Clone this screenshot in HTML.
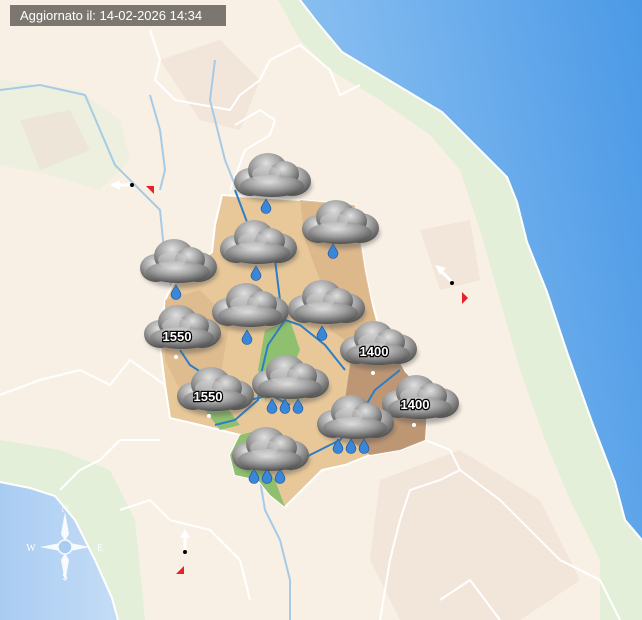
<!DOCTYPE html>
<html><head><meta charset="utf-8"><style>
html,body{margin:0;padding:0;width:642px;height:620px;overflow:hidden;background:#f8f0e4}
svg{display:block}
.lbl{position:absolute;left:10px;top:5px;width:216px;height:21px;background:rgba(112,108,102,0.92);color:#fff;font:13px "Liberation Sans",sans-serif;line-height:21px;padding-left:10px;box-sizing:border-box}
</style></head><body>
<svg width="642" height="620" viewBox="0 0 642 620" xmlns="http://www.w3.org/2000/svg">
<defs>
<linearGradient id="sea" x1="1" y1="0" x2="0" y2="0.3"><stop offset="0" stop-color="#4b99e6"/><stop offset="1" stop-color="#8ec2f2"/></linearGradient>
<linearGradient id="sea2" x1="0" y1="0" x2="1" y2="0"><stop offset="0" stop-color="#a9ccf2"/><stop offset="1" stop-color="#c4dcf6"/></linearGradient>
<radialGradient id="cl" cx="0.45" cy="0.3" r="0.7"><stop offset="0" stop-color="#e0e0e0"/><stop offset="0.5" stop-color="#a0a0a0"/><stop offset="1" stop-color="#505050"/></radialGradient>
<filter id="bl"><feGaussianBlur stdDeviation="2"/></filter>
<g id="cloud">
<ellipse cx="2" cy="8" rx="38" ry="16" fill="#555" opacity="0.45" filter="url(#bl)"/>
<ellipse cx="-22" cy="4" rx="16" ry="14" fill="url(#cl)"/>
<ellipse cx="20" cy="3" rx="19" ry="15" fill="url(#cl)"/>
<ellipse cx="-4" cy="-8" rx="20" ry="17" fill="url(#cl)"/>
<ellipse cx="12" cy="-4" rx="15" ry="13" fill="url(#cl)"/>
<ellipse cx="0" cy="8" rx="32" ry="11" fill="url(#cl)"/>
<ellipse cx="-6" cy="-4" rx="14" ry="8" fill="#cfcfcf" opacity="0.5"/>
</g>
<path id="drop" d="M0,-7 C2,-3 5,0 5,2.5 A5,5 0 0 1 -5,2.5 C-5,0 -2,-3 0,-7Z" fill="#3a86d8" stroke="#1a4f90" stroke-width="0.6"/>
</defs>
<rect width="642" height="620" fill="#f8f0e4"/>
<path d="M278,0 L300,0 L317,22 L342,52 L392,82 L442,112 L482,152 L507,177 L517,202 L527,242 L547,292 L567,352 L592,422 L615,482 L625,520 L642,540 L642,620 L600,620 L600,560 L570,500 L545,440 L520,370 L500,300 L480,230 L460,170 L430,135 L380,100 L330,70 L300,40Z" fill="#e4efd9"/>
<path d="M0,80 L80,90 L120,120 L130,160 L100,190 L50,175 L0,165Z" fill="#e8f0dc" opacity="0.7"/>
<path d="M0,440 L60,450 L110,470 L135,520 L145,620 L0,620Z" fill="#e4efd9"/>
<g fill="#ecdcd2" opacity="0.55">
<path d="M160,60 L220,40 L260,80 L240,130 L200,120Z"/>
<path d="M380,480 L460,450 L540,500 L580,580 L520,620 L400,620 L370,560Z"/>
<path d="M20,120 L70,110 L90,150 L40,170Z"/>
<path d="M420,230 L470,220 L480,280 L440,290Z"/>
</g>
<path d="M300,0 L642,0 L642,540 L625,520 L615,482 L592,422 L567,352 L547,292 L527,242 L517,202 L507,177 L482,152 L442,112 L392,82 L342,52 L317,22Z" fill="url(#sea)"/>
<path d="M0,482 L30,488 L55,496 L75,520 L95,560 L112,598 L118,620 L0,620Z" fill="url(#sea2)"/>
<path d="M300,0 L317,22 L342,52 L392,82 L442,112 L482,152 L507,177 L517,202 L527,242 L547,292 L567,352 L592,422 L615,482 L625,520 L642,540" fill="none" stroke="#fff" stroke-width="2"/>
<path d="M0,482 L30,488 L55,496 L75,520 L95,560 L112,598 L118,620" fill="none" stroke="#fff" stroke-width="2"/>
<g fill="none" stroke="#fff" stroke-width="2">
<path d="M150,30 L160,60 L155,80 L175,100 L230,110 L240,95 L260,80 L270,60 L300,45 L330,70 L340,95 L360,85"/>
<path d="M235,125 L260,110 L275,120 L270,135 L245,150 L230,190"/>
<path d="M0,395 L40,380 L80,370 L110,385 L130,360 L165,385"/>
<path d="M160,440 L120,440 L100,460 L80,470 L60,490"/>
<path d="M425,440 L450,450 L460,470 L440,480 L410,490 L400,520 L390,560 L380,620"/>
<path d="M460,470 L500,500 L560,560 L600,580 L620,620"/>
<path d="M120,510 L150,500 L170,520 L210,530 L240,560 L250,600"/>
<path d="M440,600 L470,580 L500,620"/>
</g>
<g fill="none" stroke="#a6cbe6" stroke-width="2">
<path d="M0,90 L40,85 L85,95 L100,130 L115,165 L140,190 L160,210 L165,260 L175,300"/>
<path d="M150,95 L160,130 L165,170 L160,190"/>
<path d="M215,60 L210,100 L220,140 L225,160 L235,185"/>
<path d="M260,480 L265,510 L280,540 L290,580 L290,620"/>
</g>
<path d="M222,195 L300,200 L355,205 L365,270 L370,295 L380,330 L392,348 L405,372 L428,395 L425,440 L400,450 L370,455 L345,465 L322,470 L302,490 L285,507 L270,495 L258,480 L235,475 L230,455 L240,435 L220,430 L200,425 L170,418 L165,385 L160,345 L165,300 L175,280 L212,252 L215,225Z" fill="#e8c898" stroke="#fff" stroke-width="2"/>
<path d="M300,200 L355,205 L365,270 L375,320 L360,350 L330,330 L320,280 L305,240Z" fill="#d9b488" opacity="0.8"/>
<path d="M355,330 L392,348 L405,372 L428,395 L425,440 L400,450 L370,455 L350,440 L345,400Z" fill="#b89070" opacity="0.9"/>
<path d="M165,300 L200,290 L230,320 L220,380 L180,390 L165,360Z" fill="#d9b488" opacity="0.6"/>
<path d="M265,330 L290,320 L300,350 L285,385 L265,400 L258,370Z" fill="#8fc070"/>
<path d="M240,435 L260,430 L262,460 L275,480 L285,507 L270,495 L258,480 L235,475 L230,455Z" fill="#8fc070"/>
<path d="M205,410 L225,405 L240,425 L220,430Z" fill="#8fc070"/>
<g fill="none" stroke="#2d7ec4" stroke-width="2">
<path d="M235,190 L250,230 L260,240"/>
<path d="M275,260 L280,300 L285,320 L268,345 L262,370 L258,400 L235,420 L215,425"/>
<path d="M285,320 L300,325 L325,345 L345,370"/>
<path d="M180,350 L190,365 L210,378"/>
<path d="M250,400 L270,395 L290,405"/>
<path d="M400,370 L375,390 L360,415 L340,440 L310,455 L290,470"/>
</g>
<use href="#cloud" x="272" y="178"/>
<use href="#cloud" x="340" y="225"/>
<use href="#cloud" x="258" y="245"/>
<use href="#cloud" x="178" y="264"/>
<use href="#cloud" x="250" y="308"/>
<use href="#cloud" x="326" y="305"/>
<use href="#cloud" x="182" y="330"/>
<use href="#cloud" x="378" y="346"/>
<use href="#cloud" x="215" y="392"/>
<use href="#cloud" x="290" y="380"/>
<use href="#cloud" x="420" y="400"/>
<use href="#cloud" x="355" y="420"/>
<use href="#cloud" x="270" y="452"/>
<g>
<use href="#drop" x="266" y="206" transform="scale(1)"/>
<use href="#drop" x="333" y="251"/>
<use href="#drop" x="256" y="273"/>
<use href="#drop" x="176" y="292"/>
<use href="#drop" x="247" y="337"/>
<use href="#drop" x="322" y="333"/>
<use href="#drop" x="272" y="406"/><use href="#drop" x="285" y="406"/><use href="#drop" x="298" y="406"/>
<use href="#drop" x="338" y="446"/><use href="#drop" x="351" y="446"/><use href="#drop" x="364" y="446"/>
<use href="#drop" x="254" y="476"/><use href="#drop" x="267" y="476"/><use href="#drop" x="280" y="476"/>
</g>
<g fill="#fff"><circle cx="176" cy="357" r="2"/><circle cx="209" cy="416" r="2"/><circle cx="373" cy="373" r="2"/><circle cx="414" cy="425" r="2"/></g>
<g font-family="Liberation Sans,sans-serif" font-weight="bold" font-size="13" fill="#fff" stroke="#000" stroke-width="2.5" paint-order="stroke" text-anchor="middle">
<text x="177" y="341">1550</text><text x="208" y="401">1550</text><text x="374" y="356">1400</text><text x="415" y="409">1400</text>
</g>
<g>
<path d="M132,185 L118,185" stroke="#fff" stroke-width="3"/><path d="M110,185 L120,180 L120,190Z" fill="#fff"/>
<circle cx="132" cy="185" r="2" fill="#000"/><path d="M146,186 L154,186 L154,194Z" fill="#e8202a"/>
<path d="M452,282 L440,270" stroke="#fff" stroke-width="3"/><path d="M435,265 L446,268 L440,275Z" fill="#fff"/>
<circle cx="452" cy="283" r="2" fill="#000"/><path d="M462,292 L468,298 L462,304Z" fill="#e8202a"/>
<path d="M185,550 L185,536" stroke="#fff" stroke-width="3"/><path d="M185,529 L180,538 L190,538Z" fill="#fff"/>
<circle cx="185" cy="552" r="2" fill="#000"/><path d="M184,566 L184,574 L176,574Z" fill="#e8202a"/>
</g>
<g fill="#fff" opacity="0.9">
<path d="M65,512 L69,534 L65,541 L61,534Z"/><path d="M65,582 L69,560 L65,553 L61,560Z"/>
<path d="M40,547 L60,543 L65,547 L60,551Z"/><path d="M90,547 L70,543 L65,547 L70,551Z"/>
<circle cx="65" cy="547" r="7" fill="#a8ccf2" stroke="#fff" stroke-width="1.5"/>
</g>
<g font-family="Liberation Serif,serif" font-size="10" fill="#fff" text-anchor="middle">
<text x="65" y="512">N</text><text x="31" y="551">W</text><text x="100" y="551">E</text><text x="65" y="580">S</text>
</g>
</svg>
<div class="lbl">Aggiornato il: 14-02-2026 14:34</div>
</body></html>
